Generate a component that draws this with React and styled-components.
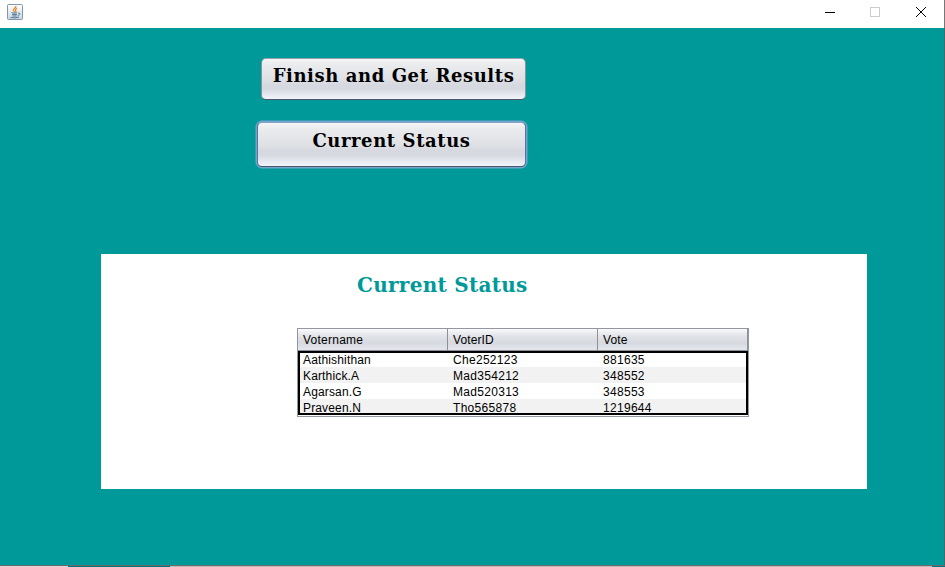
import React from "react";
import styled, { createGlobalStyle } from "styled-components";

const GlobalStyle = createGlobalStyle`
  * { box-sizing: border-box; }
  body { margin: 0; overflow: hidden; }
`;

const Window = styled.div`
  width: 945px;
  height: 567px;
  display: flex;
  flex-direction: column;
  background: #009999;
  font-family: "Liberation Sans", Arial, sans-serif;
`;

const TitleBar = styled.header`
  height: 28px;
  flex: none;
  display: flex;
  justify-content: space-between;
  background: #fff;
  border-right: 1px solid #777;
  padding: 4px 17px 0 7px;
`;

const Controls = styled.div`
  display: flex;
  gap: 34px;
  padding-top: 2px;
`;

const Content = styled.main`
  height: 537px;
  display: flex;
  flex-direction: column;
  align-items: flex-start;
  border-right: 1px solid #4b6868;
`;

const ActionButton = styled.button`
  display: flex;
  align-items: flex-start;
  justify-content: center;
  width: ${(p) => (p.$focused ? 269 : 265)}px;
  height: ${(p) => (p.$focused ? 45 : 42)}px;
  margin: ${(p) => (p.$focused ? "22px 0 0 257px" : "30px 0 0 261px")};
  padding: ${(p) => (p.$focused ? 5 : 4)}px 0 0;
  border: 1px solid ${(p) => (p.$focused ? "#5d7296" : "#8a929c")};
  border-top-color: ${(p) => (p.$focused ? "#8ba5c6" : "#9aa3ad")};
  border-bottom-color: #4f5663;
  border-radius: 5px;
  background: linear-gradient(#f6f6f8 0%, #ebecee 12%, #dfe1e5 50%, #d5d8df 66%, #d7dae1 76%, #eceff6 95%, #f0f3f8 100%);
  box-shadow: ${(p) => (p.$focused ? "0 0 0 1.5px #73a4d1" : "none")};
  outline: none;
  color: #000;
  font: bold 18px/26px "DejaVu Serif", serif;
  letter-spacing: 0.58px;
  white-space: nowrap;
`;

const Panel = styled.section`
  width: 766px;
  height: 235px;
  margin: 87px 0 0 101px;
  background: #fff;
`;

const Heading = styled.h1`
  margin: 17px 0 0 256px;
  height: 28px;
  color: #009999;
  font: bold 20px/28px "DejaVu Serif", serif;
  letter-spacing: 0.28px;
  white-space: nowrap;
`;

const TableFrame = styled.div`
  width: 452px;
  height: 89px;
  margin: 29px 0 0 196px;
  border: 1px solid #9297a1;
  color: #000;
  font-size: 12px;
`;

const HeaderRow = styled.div`
  display: grid;
  grid-template-columns: repeat(3, 150px);
  height: 22px;
  border-bottom: 1px solid #8a8f99;
  background: linear-gradient(#fafafc, #e4e6ea 28%, #dcdee3 50%, #d6d9df 65%, #e4e6ec);
`;

const HeaderCell = styled.div`
  padding-left: 5px;
  line-height: 23px;
  height: 21px;
  letter-spacing: ${(p) => p.$spacing || 0}px;
  border-right: 1px solid #8b9099;
`;

const Body = styled.div`
  height: 64px;
  border: 2px solid #000;
  overflow: hidden;
`;

const Row = styled.div`
  display: grid;
  grid-template-columns: 150px 150px 146px;
  height: 16px;
  background: ${(p) => (p.$striped ? "#f2f2f2" : "#fff")};
  &:first-child { margin-top: -2px; }
`;

const Cell = styled.div`
  padding-left: 3px;
  height: 16px;
  line-height: 18px;
  letter-spacing: ${(p) => p.$spacing || 0}px;
  white-space: nowrap;
`;

const BottomEdge = styled.footer`
  height: 2px;
  flex: none;
  border-top: 1px solid #666b6b;
  background: linear-gradient(90deg, #d6d6dc 68px, #00727a 68px 170px, #b9bbbd 170px 932px, #007780 932px);
  background-origin: border-box;
`;

const columns = [
  { title: "Votername", spacing: 0.25 },
  { title: "VoterID", spacing: 0.1 },
  { title: "Vote", spacing: 0.15 },
];
const voters = [
  ["Aathishithan", "Che252123", "881635"],
  ["Karthick.A", "Mad354212", "348552"],
  ["Agarsan.G", "Mad520313", "348553"],
  ["Praveen.N", "Tho565878", "1219644"],
];
const valueSpacing = [0.15, 0.3, 0.3];

function JavaIcon() {
  return (
    <svg width="16" height="16" viewBox="0 0 16 16" fill="none">
      <defs>
        <linearGradient id="tile" x1="0" y1="0" x2="0" y2="1">
          <stop stopColor="#fff" />
          <stop offset="1" stopColor="#cbd5de" />
        </linearGradient>
      </defs>
      <rect x=".5" y=".5" width="15" height="15" rx="1" fill="url(#tile)" stroke="#8197aa" />
      <path d="M9 2C9.4 4 5.7 4.6 6.4 6.5L8 8.5M10 4.3C8 5.4 8.3 6.3 9 7.2L8.5 8.5" stroke="#e7832c" strokeWidth="1.2" />
      <path d="M4.5 8.7Q7 9.5 10 8.8M5 10.6H10M5.5 12H9.5M3.5 13.5Q8 14.5 12 13M11 9.2C14.2 8.7 13 11.2 10.8 11.4" stroke="#4e7896" />
    </svg>
  );
}

export default function App() {
  return (
    <>
      <GlobalStyle />
      <Window>
        <TitleBar>
          <JavaIcon />
          <Controls>
            <svg width="12" height="12" shapeRendering="crispEdges"><path d="M2 6.5H12" stroke="#000" /></svg>
            <svg width="12" height="12" shapeRendering="crispEdges"><rect x="1.5" y="1.5" width="9" height="9" fill="none" stroke="#ccc" /></svg>
            <svg width="12" height="12"><path d="M1 1L11 11M11 1L1 11" stroke="#000" strokeWidth="1" /></svg>
          </Controls>
        </TitleBar>
        <Content>
          <ActionButton>Finish and Get Results</ActionButton>
          <ActionButton $focused>Current Status</ActionButton>
          <Panel>
            <Heading>Current Status</Heading>
            <TableFrame>
              <HeaderRow>
                {columns.map((c) => <HeaderCell key={c.title} $spacing={c.spacing}>{c.title}</HeaderCell>)}
              </HeaderRow>
              <Body>
                {voters.map((voter, i) => (
                  <Row key={voter[0]} $striped={i % 2 === 1}>
                    {voter.map((value, column) => <Cell key={value} $spacing={valueSpacing[column]}>{value}</Cell>)}
                  </Row>
                ))}
              </Body>
            </TableFrame>
          </Panel>
        </Content>
        <BottomEdge />
      </Window>
    </>
  );
}
